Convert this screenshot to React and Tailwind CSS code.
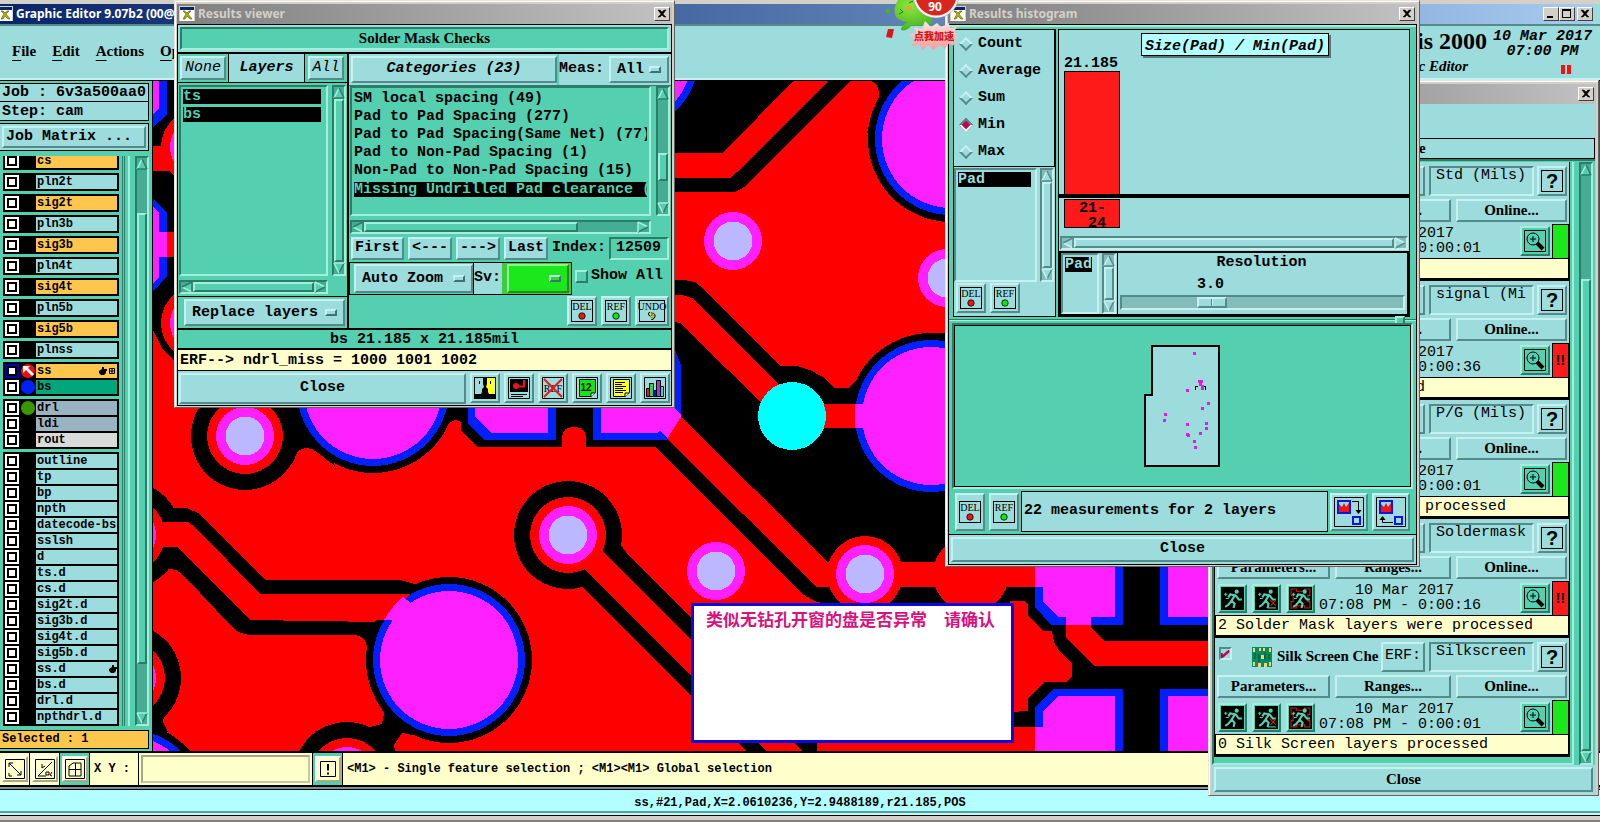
import React from "react";

const MONO = "font-['Liberation_Mono',monospace]";
const SERIF = "font-['Liberation_Serif',serif]";
const RAISED = "border-2 border-t-[#c6f1f1] border-l-[#c6f1f1] border-b-[#558a8a] border-r-[#558a8a] bg-[#9cdcdc]";
const SUNKEN = "border-2 border-t-[#558a8a] border-l-[#558a8a] border-b-[#c6f1f1] border-r-[#c6f1f1]";
const RAISED_GREEN = "border-2 border-t-[#a4efdb] border-l-[#a4efdb] border-b-[#2c7d67] border-r-[#2c7d67] bg-[#54cfb0]";
const SUNKEN_GREEN = "border-2 border-t-[#2c7d67] border-l-[#2c7d67] border-b-[#a4efdb] border-r-[#a4efdb]";

function XIcon() {
  return (
    <svg viewBox="0 0 16 16" className="h-4 w-4 shrink-0">
      <rect x="0" y="0" width="16" height="15" fill="#d4d0c8" />
      <rect x="1" y="1" width="14" height="3" fill="#0a246a" />
      <rect x="1" y="4" width="14" height="11" fill="#fff" />
      <path d="M4 5l3 3-3 5h2l2-3 3 3h2l-4-5 3-3h-2L8 7 6 5z" fill="#b5b000" stroke="#555500" strokeWidth="0.6" />
    </svg>
  );
}

function WinButton({ kind, label }) {
  return (
    <button
      type="button"
      aria-label={label}
      className="flex h-[14px] w-4 shrink-0 items-center justify-center border border-t-white border-l-white border-r-[#404040] border-b-[#404040] bg-[#d4d0c8]"
    >
      <svg viewBox="0 0 10 10" className="h-[10px] w-[10px]">
        {kind === "close" && <path d="M1 1h2l2 2 2-2h2L6 5l3 3H7L5 6 3 8H1l3-3z" fill="#000" stroke="#000" strokeWidth="0.5" />}
        {kind === "min" && <rect x="1" y="7" width="6" height="2" fill="#000" />}
        {kind === "max" && <path d="M0 0h9v9H0zM1 2v6h7V2z" fill="#000" fillRule="evenodd" />}
      </svg>
    </button>
  );
}

function TitleText({ children, className }) {
  return (
    <span className={"flex-1 truncate font-['Noto_Sans',sans-serif] text-[12px] leading-5 font-bold whitespace-nowrap " + className}>
      {children}
    </span>
  );
}

function DesktopWindow({ title, className, children, icon = true }) {
  return (
    <section
      aria-label={title || "Checklist"}
      className={"absolute flex flex-col border border-t-[#e8e4dc] border-l-[#e8e4dc] border-r-[#606060] border-b-[#606060] bg-[#d4d0c8] px-[2px] pt-[3px] pb-px shadow-[inset_1px_1px_0_#fff] " + className}
    >
      <header className="flex h-5 items-center gap-[3px] bg-linear-to-r from-[#808080] to-[#c2c2c2] px-[2px]">
        {icon && <XIcon />}
        <TitleText className="text-[#d4d0c8]">{title}</TitleText>
        <WinButton kind="close" label="Close window" />
      </header>
      {children}
    </section>
  );
}

function Arrow({ dir, green }) {
  const hi = green ? "#a4efdb" : "#c6f1f1";
  const lo = green ? "#2c7d67" : "#558a8a";
  const face = green ? "#54cfb0" : "#9cdcdc";
  const rot = { up: 0, right: 90, down: 180, left: 270 }[dir];
  const flip = dir === "down" || dir === "right";
  return (
    <svg viewBox="0 0 12 12" className="h-3 w-3 shrink-0">
      <g transform={`rotate(${rot} 6 6)`}>
        <path d="M6 1L11 11H1z" fill={face} />
        <path d="M6 1L1 11" stroke={dir === "down" ? lo : hi} strokeWidth="1.5" />
        <path d="M6 1L11 11" stroke={dir === "down" ? hi : lo} strokeWidth="1.5" />
        <path d="M1 11H11" stroke={flip ? hi : lo} strokeWidth="1.5" />
      </g>
    </svg>
  );
}

function Scroll({ horizontal, green, start = 0, size = 100, className = "" }) {
  const rest = 100 - start - size;
  const trough = green ? SUNKEN_GREEN + " bg-[#45ad94]" : SUNKEN + " bg-[#84bcbc]";
  const thumb = green ? RAISED_GREEN : RAISED;
  return (
    <div className={`flex shrink-0 ${horizontal ? "h-[14px] flex-row items-center" : "w-[14px] flex-col items-center"} ${trough} ${className}`}>
      <Arrow dir={horizontal ? "left" : "up"} green={green} />
      <div className={`flex min-h-0 min-w-0 flex-1 self-stretch ${horizontal ? "flex-row" : "flex-col"}`}>
        <div style={{ flexGrow: start }} />
        <div style={{ flexGrow: size }} className={thumb} />
        <div style={{ flexGrow: rest }} />
      </div>
      <Arrow dir={horizontal ? "right" : "down"} green={green} />
    </div>
  );
}

function Picker({ label, value, className, green }) {
  return (
    <div className={`flex items-center pr-[6px] pl-[6px] ${green ? "border-2 border-t-[#8df58d] border-l-[#8df58d] border-r-[#2a862a] border-b-[#2a862a] bg-[#1ae81a]" : RAISED} ${className}`}>
      <select aria-label={label} defaultValue={value} className="min-w-0 flex-1 appearance-none bg-transparent leading-5 outline-none">
        <option value={value}>{value}</option>
      </select>
      <span className={`h-[7px] w-3 shrink-0 border-2 border-t-[#c6f1f1] border-l-[#c6f1f1] border-r-[#3f7373] border-b-[#3f7373] ${green ? "bg-[#1ae81a]" : "bg-[#9cdcdc]"}`} />
    </div>
  );
}

function Btn({ children, className = "" }) {
  return (
    <button type="button" className={`flex items-center justify-center whitespace-nowrap ${RAISED} ${className}`}>
      {children}
    </button>
  );
}

function StampBtn({ text, dot, tall, wide }) {
  return (
    <button type="button" className={`flex shrink-0 items-center justify-center ${RAISED} ${tall ? "h-[38px]" : "h-[30px]"} ${wide ? "w-[34px]" : "w-[30px]"}`}>
      <span className={`flex h-[22px] flex-col items-center border border-black ${wide ? "w-[26px]" : "w-[22px]"}`}>
        <span className={`${SERIF} text-[10px] leading-[11px] font-normal`}>{text}</span>
        <svg viewBox="0 0 8 8" className="h-2 w-2">
          {dot ? (
            <circle cx="4" cy="4" r="3.2" fill={dot} stroke="#000" strokeWidth="0.8" />
          ) : (
            <>
              <path d="M3 0L1 2l2 2M1.5 2H5q2 1 1 3t-3 2" fill="none" stroke="#000" strokeWidth="2.4" />
              <path d="M3 0.5L1.5 2 3 3.5M2 2h3q1.5 1 .7 2.7T3 7" fill="none" stroke="#f2ef20" strokeWidth="1.2" />
            </>
          )}
        </svg>
      </span>
    </button>
  );
}

/* ---------- board artwork ---------- */

function Pad({ x, y, ring = true, halo = false }) {
  return (
    <g>
      {halo && <circle cx={x} cy={y} r="54" fill="#000" />}
      {ring && <circle cx={x} cy={y} r="38" fill="#f00" />}
      <circle cx={x} cy={y} r="29" fill="#ff20ff" />
      <circle cx={x} cy={y} r="19.5" fill="#bbb8ff" />
    </g>
  );
}

function Disc({ x, y }) {
  return (
    <g>
      <circle cx={x} cy={y} r="83" fill="#000" />
      <circle cx={x} cy={y} r="76" fill="#0020ff" />
      <circle cx={x} cy={y} r="69" fill="#ff20ff" />
    </g>
  );
}

function Board() {
  return (
    <svg className="absolute inset-0 h-full w-full" shapeRendering="crispEdges" aria-label="Board layout">
      <g transform="translate(-153 -81)">
        <rect x="153" y="81" width="1500" height="700" fill="#f00" />

        <path d="M153 81H185V362L173 360L162 348L153 330z" fill="#000" />
        <path d="M153 81H167V115L153 127z" fill="#0020ff" />
        <path d="M153 81H159V108L153 114z" fill="#ff20ff" />
        <rect x="153" y="146" width="30" height="25" fill="#f00" />
        <Pad x={199} y={147} />
        <path d="M153 198L167 213V276L153 292z" fill="#0020ff" />
        <path d="M153 206L159 213V232H167V257H159V277L153 284z" fill="#ff20ff" />
        <rect x="167" y="232" width="10" height="25" fill="#f00" />
        <Pad x={199} y={323} />

        <path d="M280 405H300L335 466L318 453L312 449L305 448L298 451L293 462L285 470z" fill="#000" />
        <Pad x={245} y={436} halo />

        <path d="M415 461L440 437L447 424L455 420L461 422V431L478 447H562V437Q563 427 574 427T586 437V447H655L804 595L817 602H900V400H675V395H430z" fill="#000" />
        <Disc x={373} y={390} />

        <path d="M468 400V424L484 440H556V400z" fill="#0020ff" />
        <path d="M475 400V416L491 433H548V400z" fill="#ff20ff" />
        <path d="M593 400V440H667L681 424V365L675 350V400z" fill="#0020ff" />

        <path d="M660 280H684L695 282L705 290L780 366H797L810 370L823 377L835 388H848L857 380L862 370L931 333H960V562H828L681 418L660 400z" fill="#000" />
        <path d="M675 350L681 365V424H675z" fill="#0020ff" />
        <path d="M601 400V433H657L660 431L667 438L681 424V415L674 408V400z" fill="#ff20ff" />
        <path d="M681 417L667 439L817 587H1035V562H828z" fill="#f00" />
        <path d="M660 295H682L692 298L790 396L775 416L680 323L660 320z" fill="#f00" />

        <path d="M817 587H1035V640H820V602L805 596z" fill="#000" />
        <path d="M828 562H1035V587H817z" fill="#f00" />
        <path d="M828 562H1000V520H828z" fill="#000" />
        <circle cx="971" cy="574" r="38" fill="#f00" />
        <Pad x={865} y={574} />

        <Disc x={931} y={416} />
        <rect x="820" y="404" width="36" height="24" fill="#f00" />
        <rect x="855" y="404" width="14" height="24" fill="#ff20ff" />
        <circle cx="792" cy="416" r="34" fill="#0ff" />

        <path d="M660 81H851L743 188L735 192H660z" fill="#000" />
        <path d="M660 153H723L793 81H829L736 173L730 178H660z" fill="#f00" />
        <circle cx="622" cy="56" r="77" fill="#0020ff" />
        <circle cx="622" cy="56" r="70" fill="#ff20ff" />
        <path d="M871 81Q880 84 879 97L872 112L867 133L900 160L960 81z" fill="#000" />
        <Disc x={951} y={139} />
        <Pad x={733} y={241} ring={false} />
        <Pad x={947} y={278} ring={false} />

        <circle cx="127" cy="535" r="54" fill="#000" />
        <path d="M153 488L173 508H187L200 514L265 580H400L415 584L400 640L367 671V647Q366 636 355 635H250Q240 634 233 628L183 575Q175 567 165 570L153 582z" fill="#000" />
        <path d="M153 522H188L195 527L260 594H411L380 622L250 620L177 547H153z" fill="#f00" />
        <circle cx="127" cy="535" r="38" fill="#f00" />
        <circle cx="127" cy="535" r="29" fill="#ff20ff" />
        <path d="M376 700L384 713L382 724L370 727L395 751L394 745L402 733L440 740L430 700z" fill="#000" />
        <Disc x={449} y={660} />
        <path d="M360 594H411L399 604L386 620H360z" fill="#f00" />
        <path d="M384 620Q392 606 403 597L411 603L400 615L393 620z" fill="#ff20ff" />
        <Pad x={347} y={776} halo />

        <path d="M153 700L174 704L164 716L163 722L168 732L153 736z" fill="#000" />
        <circle cx="127" cy="678" r="54" fill="#000" />
        <circle cx="127" cy="678" r="38" fill="#f00" />
        <circle cx="127" cy="678" r="29" fill="#ff20ff" />
        <Disc x={127} y={805} />

        <path d="M621 530V545L628 555L817 743V765H780L586 587H568V500z" fill="#000" />
        <path d="M582 587L747 752H767L586 571z" fill="#000" />
        <path d="M604 553L586 571L777 762H813z" fill="#f00" />
        <Pad x={568} y={535} halo />
        <path d="M599 548L581 566L610 595L640 589z" fill="#f00" />
        <Pad x={716} y={571} ring={false} />

        <path d="M1010 587H1250V751H1035V727H1010z" fill="#000" />
        <path d="M1010 601H1025L1028 605V615L1043 631H1052L1054 642L1060 652L1072 664V676L1066 682H1045L1028 698V711L1010 712z" fill="#f00" />
        <rect x="1010" y="727" width="25" height="24" fill="#f00" />
        <rect x="1123" y="560" width="40" height="130" fill="#000" />
        <path d="M1035 560H1123V625H1051L1035 607z" fill="#0020ff" />
        <path d="M1035 560H1115V617H1091V625H1066V617H1058L1043 601V587H1035z" fill="#ff20ff" />
        <path d="M1066 625H1091V628L1104 641H1250V666H1094L1066 638z" fill="#f00" />
        <path d="M1160 560H1250V625H1160z" fill="#0020ff" />
        <path d="M1168 560H1250V617H1168z" fill="#ff20ff" />
        <path d="M1035 727V707L1053 689H1123V760H1035z" fill="#0020ff" />
        <path d="M1043 727V711L1059 696H1115V760H1035V727z" fill="#ff20ff" />
        <path d="M1160 689H1250V760H1160z" fill="#0020ff" />
        <path d="M1168 696H1250V760H1168z" fill="#ff20ff" />
      </g>
    </svg>
  );
}

/* ---------- layer sidebar ---------- */

const O = "bg-[#ffc64d]";
const C = "bg-[#9cdcdc]";
const GROUPS = [
  [["cs", O]], [["pln2t", C]], [["sig2t", O]], [["pln3b", C]], [["sig3b", O]],
  [["pln4t", C]], [["sig4t", O]], [["pln5b", C]], [["sig5b", O]], [["plnss", C]],
  [["ss", O, "arrow"], ["bs", "bg-[#00a67c]", "#0020ff"]],
  [["drl", "bg-[#9ab3c0]", "#3c9600"], ["ldi", "bg-[#9ab3c0]"], ["rout", "bg-[#dadada]"]],
  ["outline", "tp", "bp", "npth", "datecode-bs", "sslsh", "d", "ts.d", "cs.d", "sig2t.d", "sig3b.d", "sig4t.d", "sig5b.d", "ss.d", "bs.d", "drl.d", "npthdrl.d"].map((n) => [n, C]),
];

function Hand() {
  return (
    <svg viewBox="0 0 8 8" className="h-2 w-2">
      <path d="M0 4l3-2V0h2v2h3v2H7v2l-2 2H2L0 6z" fill="#000" />
    </svg>
  );
}

function LayerRow({ name, tone, mark }) {
  const active = name === "ss";
  return (
    <li className="flex h-[14px] items-center pr-[2px] pl-[2px]">
      <input
        type="checkbox"
        aria-label={"Display " + name}
        className={`h-[14px] w-[14px] shrink-0 appearance-none border-2 bg-white shadow-[inset_0_0_0_2px_#000] ${active ? "border-[#0000b4]" : "border-white"}`}
      />
      <span className="flex w-[17px] shrink-0 items-center justify-center">
        {mark && (
          <svg viewBox="0 0 14 14" className="h-[14px] w-[14px]">
            <circle cx="7" cy="7" r="7" fill={active ? "#e81010" : mark} />
            {active && <path d="M2 2h7L7 4l6 6-2 2-6-6-3 3z" fill="#fff" />}
          </svg>
        )}
      </span>
      <span className={`flex h-[14px] min-w-0 flex-1 items-center pl-px text-[12px] leading-[14px] ${tone}`}>
        <span className="flex-1 whitespace-nowrap">{name}</span>
        {(active || name === "ss.d") && <Hand />}
        {active && (
          <svg viewBox="0 0 6 6" className="mx-[2px] h-[6px] w-[6px]">
            <path d="M.5.5h5v5h-5zM3 0v6M0 3h6" fill="none" stroke="#000" />
          </svg>
        )}
      </span>
    </li>
  );
}

function Sidebar() {
  return (
    <aside className="flex w-[153px] shrink-0 flex-col border-r border-black bg-[#54cfb0] pt-[2px] pr-[3px]">
      <div className="h-[19px] border border-l-0 border-black bg-[#9cdcdc] pl-[2px] leading-[18px]">Job : 6v3a500aa0</div>
      <div className="h-[19px] border border-t-0 border-l-0 border-black bg-[#9cdcdc] pl-[2px] leading-5">Step: cam</div>
      <div className="mt-[2px] border border-l-0 border-black bg-[#9cdcdc] p-[2px]">
        <button type="button" className={`block h-[22px] w-full pl-[2px] text-left leading-[18px] ${RAISED}`}>Job Matrix ...</button>
      </div>
      <div className="mt-[5px] flex h-[570px] min-h-0 pl-[3px]">
        <div className="flex min-w-0 flex-1 flex-col justify-end gap-[3px] overflow-hidden">
          {GROUPS.map((group, i) => (
            <ul key={i} className="flex flex-col gap-[2px] bg-black py-[2px]">
              {group.map(([name, tone, mark]) => (
                <LayerRow key={name} name={name} tone={tone} mark={mark} />
              ))}
            </ul>
          ))}
        </div>
        <div className="mr-[3px] ml-[3px] w-[3px] border-x border-x-[#2c7d67]" />
        <div className="mr-[5px] w-[2px] bg-[#a4efdb]" />
        <Scroll green start={8} size={83} />
      </div>
      <div className="mt-[4px] h-[19px] border border-l-0 border-black bg-[#ffc64d] pl-[2px] text-[12px] leading-[17px]">Selected : 1</div>
      <div className="flex-1" />
    </aside>
  );
}

/* ---------- results viewer ---------- */

const CATEGORIES = [
  "SM local spacing (49)",
  "Pad to Pad Spacing (277)",
  "Pad to Pad Spacing(Same Net) (77)",
  "Pad to Non-Pad Spacing (1)",
  "Non-Pad to Non-Pad Spacing (15)",
  "Missing Undrilled Pad clearance (22)",
];

function ToolBtn({ label, children }) {
  return (
    <button type="button" aria-label={label} className={`flex h-[30px] w-[30px] shrink-0 items-center justify-center ${RAISED}`}>
      <svg viewBox="0 0 22 22" className="h-[22px] w-[22px]">{children}</svg>
    </button>
  );
}

function ResultsViewer() {
  return (
    <DesktopWindow title="Results viewer" className="top-0 left-[174px] w-[501px]">
      <div className="flex flex-col border border-black bg-[#9cdcdc]">
        <div className="border-b-2 border-black p-[2px]">
          <h1 className={`h-[23px] text-center text-[15px] leading-[19px] font-bold ${SERIF} ${SUNKEN_GREEN} bg-[#54cfb0]`}>Solder Mask Checks</h1>
        </div>
        <div className="flex h-[274px]">
          <div className="flex w-[171px] shrink-0 flex-col border-r-2 border-black bg-[#54cfb0]">
            <div className="flex h-[29px] border-b border-black">
              <Btn className="my-[2px] mr-[2px] ml-[2px] w-[46px] font-normal italic">None</Btn>
              <div className="flex flex-1 items-center justify-center border-x border-black bg-[#9cdcdc] italic">Layers</div>
              <Btn className="mx-[3px] my-[2px] w-[36px] font-normal italic">All</Btn>
            </div>
            <div className="flex flex-1 gap-[4px] py-[2px] pl-px">
              <ul className={`flex-1 pt-[2px] pr-[5px] pl-[2px] ${SUNKEN_GREEN}`}>
                <li className="mb-[3px] h-[15px] bg-black leading-4 text-[#54cfb0]">ts</li>
                <li className="h-[15px] bg-black leading-4 text-[#54cfb0]">bs</li>
              </ul>
              <Scroll green className="mr-px" />
            </div>
            <Scroll green horizontal className="mt-[2px] mr-[19px] mb-[2px] ml-px" />
            <div className="flex h-[32px] border-t border-black pt-[2px] pr-[2px] pb-[2px] pl-[6px]">
              <Picker label="Layer mode" value="Replace layers" className="flex-1" />
            </div>
          </div>
          <div className="flex min-w-0 flex-1 flex-col bg-[#54cfb0]">
            <div className="flex h-[32px] border-b border-[#2c7d67] bg-[#9cdcdc]">
              <Btn className="my-[2px] ml-[2px] w-[206px] italic">Categories (23)</Btn>
              <label className="flex flex-1 items-center border-l-2 border-[#54cfb0] bg-[#9cdcdc]">Meas:</label>
              <Picker label="Measurement filter" value="All" className="my-[2px] mr-[2px] w-[60px]" />
            </div>
            <div className="flex h-[130px] gap-[5px] pl-px">
              <ul className={`min-w-0 flex-1 overflow-hidden pt-[2px] pr-[2px] pl-[2px] ${SUNKEN_GREEN}`}>
                {CATEGORIES.map((c, i) => (
                  <li key={c} className={`h-[18px] overflow-hidden text-clip whitespace-nowrap ${i === 5 ? "flex items-center" : "leading-[18px]"}`}>
                    {i === 5 ? <span className="h-[15px] w-full overflow-hidden bg-black leading-4 text-[#54cfb0]">{c}</span> : c}
                  </li>
                ))}
              </ul>
              <Scroll green start={54} size={25} className="mr-px" />
            </div>
            <Scroll green horizontal start={0} size={78} className="mt-[4px] mr-[20px] ml-px" />
            <div className="mt-[2px] flex h-[25px] items-center pl-[2px]">
              <Btn className="h-[23px] w-[53px]">First</Btn>
              <Btn className="ml-[4px] h-[23px] w-[44px]">&lt;---</Btn>
              <Btn className="ml-[4px] h-[23px] w-[44px]">---&gt;</Btn>
              <Btn className="ml-[4px] h-[23px] w-[44px]">Last</Btn>
              <label htmlFor="index" className="flex-1 pl-[4px]">Index:</label>
              <input id="index" defaultValue="12509" className={`mr-[2px] h-[23px] w-[60px] bg-transparent pb-[3px] pl-[5px] ${SUNKEN_GREEN}`} />
            </div>
            <div className="mt-px flex h-[33px] items-center">
              <div className="flex h-[33px] border border-black">
                <Picker label="Zoom mode" value="Auto Zoom" className="my-px ml-[4px] w-[119px]" />
                <span className="flex items-center border-l border-black bg-[#9cdcdc] pr-px">Sv:</span>
                <div className="flex bg-[#3ecb3e] py-px pr-[2px] pl-[5px]">
                  <Picker green label="Severity" value="" className="w-[62px]" />
                </div>
              </div>
              <label className="ml-[3px] flex items-center gap-[3px] pb-[4px]">
                <input type="checkbox" className={`h-[13px] w-[13px] appearance-none ${RAISED_GREEN}`} />
                Show All
              </label>
            </div>
            <div className="mt-px flex justify-end gap-[4px] pr-[2px]">
              <StampBtn text="DEL" dot="#f01414" />
              <StampBtn text="REF" dot="#14e614" />
              <StampBtn text="UNDO" wide />
            </div>
          </div>
        </div>
        <div className="h-[22px] border-y-2 border-black bg-[#54cfb0] text-center leading-[19px]">bs 21.185 x 21.185mil</div>
        <div className="h-[21px] border-b border-black bg-[#ffffcc] pl-[2px] leading-[21px]">ERF--&gt; ndrl_miss = 1000 1001 1002</div>
        <div className="flex h-[34px] items-center gap-[4px] px-px">
          <Btn className="h-[31px] flex-1">Close</Btn>
          <ToolBtn label="Compare">
            <path d="M0 0h22v22H0z" fill="#000" /><path d="M1 1h8v6l1 3-2 2v3l-1 2H1z" fill="#9cdcdc" /><path d="M21 1h-8v6l-1 3 2 2v3l1 2h6z" fill="#ffff20" />
            <path d="M5.500 4v3M16.500 4v3" stroke="#000" />
          </ToolBtn>
          <ToolBtn label="Snapshot">
            <path d="M.5.5h21v21H.5z" fill="none" stroke="#000" /><path d="M2 2h18v13H2z" fill="#000" /><circle cx="8" cy="9" r="3" fill="#f01414" /><path d="M9 9.500h7V3" stroke="#f01414" strokeWidth="2" fill="none" /><path d="M3 17.500h16M3 19.500h12" stroke="#000" />
          </ToolBtn>
          <ToolBtn label="Remove reference">
            <path d="M.5.5h21v21H.5z" fill="none" stroke="#000" /><text x="11" y="15" textAnchor="middle" fontSize="10" fontFamily="Liberation Serif" fontWeight="400">REF</text><path d="M2 2l18 18M20 2L2 20" stroke="#f01414" strokeWidth="2" />
          </ToolBtn>
          <ToolBtn label="Numbering">
            <path d="M.5.5h21v21H.5z" fill="none" stroke="#000" /><path d="M3.500 2.500h16v13l-4 4h-12z" fill="#14e614" stroke="#000" /><path d="M15 20v-4h4" fill="#fff" stroke="#000" /><text x="10" y="14" textAnchor="middle" fontSize="10" fontFamily="Liberation Sans">12</text>
          </ToolBtn>
          <ToolBtn label="Notes">
            <path d="M.5.5h21v21H.5z" fill="none" stroke="#000" /><path d="M3.500 2.500h16v13l-4 4h-12z" fill="#ffff20" stroke="#000" /><path d="M5 5.500h10M5 7.500h7M5 9.500h11M5 11.500h8M5 13.500h11M5 15.500h8" stroke="#000" /><path d="M15 20v-4h4" fill="#fff" stroke="#000" />
          </ToolBtn>
          <ToolBtn label="Histogram">
            <path d="M.5.5h21v21H.5z" fill="none" stroke="#000" /><g stroke="#000"><path d="M2.500 11.500h3v8h-3z" fill="#f01414" /><path d="M5.500 6.500h4v13h-4z" fill="#30d060" /><path d="M9.500 13.500h3v6h-3z" fill="#1010d0" /><path d="M12.500 3.500h4v16h-4z" fill="#b030d0" /><path d="M16.500 9.500h3v10h-3z" fill="#30d8e8" /></g>
          </ToolBtn>
        </div>
      </div>
    </DesktopWindow>
  );
}

/* ---------- results histogram ---------- */

const POINTS = [
  [1194, 354], [1200, 383], [1202, 387], [1187, 391], [1208, 404], [1202, 409], [1165, 415], [1164, 421],
  [1187, 425], [1206, 424], [1206, 429], [1200, 434], [1187, 435], [1188, 436], [1194, 442], [1195, 448], [1199, 382], [1201, 382], [1200, 385], [1202, 389],
];

function CopyBtn({ back }) {
  return (
    <button type="button" aria-label={back ? "Copy back" : "Copy forward"} className={`flex h-[38px] w-[38px] shrink-0 items-center justify-center ${RAISED}`}>
      <svg viewBox="0 0 30 30" className="h-[30px] w-[30px] shrink-0">
        <path d="M.5.5h29v29H.5z" fill="none" stroke="#000" />
        <path d="M4 4h12v12H4z" fill="#9cdcdc" stroke="#1414dc" strokeWidth="2" />
        <path d="M5 7l3 3 2-4 2 4 3-4v9H5z" fill="#f01414" />
        <path d="M19 20h7v7h-7z" fill="#9cdcdc" stroke="#1414dc" strokeWidth="2" />
        {back ? <path d="M6.500 19l-3 4h6z" fill="#000" /> : <path d="M24.500 17l-3-4h6z" fill="#000" />}
        {back ? <path d="M17 25.500H6.500V22" fill="none" stroke="#000" /> : <path d="M18 4.500h6.500V13" fill="none" stroke="#000" />}
      </svg>
    </button>
  );
}

function ResultsHistogram() {
  return (
    <DesktopWindow title="Results histogram" className="top-0 left-[945px] w-[475px]">
      <div className="flex flex-col border border-black bg-[#54cfb0]">
        <div className="flex h-[292px] gap-[2px] border-t-2 border-[#a4efdb] pt-[2px] pr-[6px] pl-[4px]">
          <div className="flex w-[103px] shrink-0 flex-col border border-black bg-[#9cdcdc]">
            <fieldset className="flex h-[137px] flex-col justify-between border-r border-b border-black">
              {["Count", "Average", "Sum", "Min", "Max"].map((n) => (
                <label key={n} className="flex h-[27px] items-center gap-[7px] pt-px pl-[7px]">
                  <input
                    type="radio"
                    name="stat"
                    defaultChecked={n === "Min"}
                    className={`h-[10px] w-[10px] rotate-45 appearance-none border-2 border-t-[#c6f1f1] border-l-[#c6f1f1] border-r-[#558a8a] border-b-[#558a8a] checked:border-t-[#558a8a] checked:border-l-[#558a8a] checked:border-r-[#e0fafa] checked:border-b-[#e0fafa] checked:bg-[#c4004e]`}
                  />
                  {n}
                </label>
              ))}
            </fieldset>
            <div className="flex flex-1 gap-[3px] pt-px">
              <ul className={`flex-1 py-[2px] pr-[4px] pl-[2px] ${SUNKEN}`}>
                <li className="h-[15px] bg-black leading-4 text-[#9cdcdc]">Pad</li>
              </ul>
              <Scroll className="mr-px" />
            </div>
            <div className="flex h-[34px] gap-[4px] pt-px pl-[2px]">
              <StampBtn text="DEL" dot="#f01414" />
              <StampBtn text="REF" dot="#14e614" />
            </div>
          </div>
          <div className="flex min-w-0 flex-1 flex-col border border-black bg-[#9cdcdc]">
            <div className="relative flex h-[168px] flex-col justify-end border-b-4 border-black pl-[5px]">
              <div className="absolute top-[3px] left-[82px] h-[23px] w-[188px] border border-black bg-[#b3ffff] pl-[3px] leading-[25px] whitespace-nowrap italic shadow-[2px_2px_0_#557a7a]">Size(Pad) / Min(Pad)</div>
              <span className="leading-[14px]">21.185</span>
              <div className="h-[123px] w-[56px] border border-b-0 border-black bg-[#ff1a1a]" />
            </div>
            <div className="flex flex-1 items-start pt-px pl-[5px]">
              <div className="h-[29px] w-[56px] border border-black bg-[#ff1a1a] pt-px pl-[14px] leading-[15px] whitespace-pre text-black">{"21-\n 24"}</div>
            </div>
            <Scroll horizontal className="mx-px" />
            <div className="mt-px flex h-[65px] border-2 border-black">
              <div className={`w-[38px] shrink-0 pt-[2px] pl-[2px] ${SUNKEN}`}>
                <span className="block h-[15px] w-[27px] bg-black leading-4 text-[#9cdcdc]">Pad</span>
              </div>
              <Scroll className="mr-px ml-[3px]" />
              <div className="flex flex-1 flex-col border-l border-black px-[2px]">
                <label htmlFor="res" className="pr-[2px] text-center leading-[19px]">Resolution</label>
                <output className="mt-[3px] pl-[77px] leading-5">3.0</output>
                <input
                  id="res" type="range" min="0" max="10" step="0.1" defaultValue="3"
                  className={`h-[15px] w-full appearance-none bg-[#84bcbc] ${SUNKEN} [&::-webkit-slider-thumb]:h-[11px] [&::-webkit-slider-thumb]:w-[30px] [&::-webkit-slider-thumb]:appearance-none [&::-webkit-slider-thumb]:border-2 [&::-webkit-slider-thumb]:border-t-[#c6f1f1] [&::-webkit-slider-thumb]:border-l-[#c6f1f1] [&::-webkit-slider-thumb]:border-r-[#558a8a] [&::-webkit-slider-thumb]:border-b-[#558a8a] [&::-webkit-slider-thumb]:bg-[linear-gradient(90deg,#9cdcdc_12px,#558a8a_12px,#558a8a_13px,#c6f1f1_13px,#c6f1f1_14px,#9cdcdc_14px)]`}
                />
              </div>
            </div>
          </div>
        </div>
        <div className="flex h-[6px] items-center">
          <div className="h-[2px] flex-1 border-t border-b border-t-[#2c7d67] border-b-[#a4efdb]" />
          <div className={`h-[9px] w-[10px] ${RAISED_GREEN}`} />
          <div className="h-[2px] w-[11px] border-t border-b border-t-[#2c7d67] border-b-[#a4efdb]" />
        </div>
        <div className={`mx-[3px] h-[166px] ${SUNKEN_GREEN}`}>
          <div className="flex h-full items-center justify-center border border-black pr-[2px]">
            <svg viewBox="1144 346 76 122" className="h-[122px] w-[76px]" shapeRendering="crispEdges">
              <path d="M1152 347H1219V467H1145V396H1152z" fill="#9cdcdc" stroke="#000" strokeWidth="2" />
              <path d="M1195 391v-4h3M1205 391v-4h-3" fill="none" stroke="#000" />
              {POINTS.map(([x, y], i) => <rect key={i} x={x - 1} y={y - 1} width="3" height="3" fill="#e01ae0" />)}
            </svg>
          </div>
        </div>
        <div className="flex h-[45px] items-center gap-[4px] pr-[6px] pl-[6px]">
          <StampBtn tall text="DEL" dot="#f01414" />
          <StampBtn tall text="REF" dot="#14e614" />
          <div className="-mx-[2px] flex h-[41px] flex-1 items-center border border-black bg-[#9cdcdc] pl-[2px]">22 measurements for 2 layers</div>
          <CopyBtn />
          <CopyBtn back />
        </div>
        <div className="flex border-t border-black bg-[#9cdcdc] p-[2px]">
          <Btn className="h-[25px] flex-1">Close</Btn>
        </div>
      </div>
    </DesktopWindow>
  );
}

/* ---------- checklist ---------- */

const CHECKS = [
  { name: "Drill Checks", erf: "Std (Mils)", time: "07:08 PM - 0:00:01", msg: "Drill layers done", bad: false },
  { name: "Signal Checks", erf: "signal (Mi", time: "07:08 PM - 0:00:36", msg: "8 Signal layers checked", bad: true },
  { name: "P/G Checks", erf: "P/G (Mils)", time: "07:08 PM - 0:00:01", msg: "10 Power/Ground layers processed", bad: false },
  { name: "Solder Mask", erf: "Soldermask", time: "07:08 PM - 0:00:16", msg: "2 Solder Mask layers were processed", bad: true },
  { name: "Silk Screen Che", erf: "Silkscreen", time: "07:08 PM - 0:00:01", msg: "0 Silk Screen layers processed", bad: false },
];

function RunBtn({ kind }) {
  return (
    <button type="button" aria-label={"Run " + kind} className={`flex h-[29px] w-[29px] items-center justify-center ${RAISED_GREEN}`}>
      <svg viewBox="0 0 22 22" className="h-[23px] w-[23px]">
        <rect width="22" height="22" fill="#000" />
        {kind === "all" && <path d="M2 2h5v2h8V2h5v6h-2v6h2v6h-5v-2H7v2H2v-6h2V8H2z" fill="none" stroke="#e01414" />}
        <circle cx="15" cy="4.500" r="2" fill="#54cfb0" />
        <path d="M14 7l-4 6 3 3-1 4M11 12l-4 5-3 2M13 8l-4-1-2 3M14 8l3 4h3" fill="none" stroke="#54cfb0" strokeWidth="2" />
        <path d="M3 7h3M4.500 5.500v3M7.500 7h2M7.500 11h-3" stroke="#54cfb0" />
        {kind === "selected" && <path d="M14 12l6 6M20 12l-5 6" stroke="#e01414" />}
        {kind === "selected" && <path d="M12 20h8" stroke="#54cfb0" />}
      </svg>
    </button>
  );
}

function CheckCard({ name, erf, time, msg, bad }) {
  return (
    <article className="flex h-[119px] flex-col border-b-2 border-black bg-[#9cdcdc]">
      <div className="flex h-[37px] items-center pr-[2px] pl-[4px]">
        <span className={`mb-[6px] flex h-[13px] w-[13px] shrink-0 items-center justify-center ${SUNKEN}`}>
          <input id={"chk-" + erf} type="checkbox" defaultChecked className="peer absolute h-[13px] w-[13px] appearance-none" />
          <svg viewBox="0 0 10 10" className="h-[10px] w-[10px]"><path d="M1 4v4l8-7M1 6l1 2 7-6" stroke="#c4004e" strokeWidth="2" fill="none" /></svg>
        </span>
        <svg viewBox="0 0 20 20" className="ml-5 h-5 w-5 shrink-0">
          <rect width="20" height="20" fill="#0c8a5c" />
          <path d="M3 6v6M7 7v8M13 5v8M17 7v6M6 10h8" stroke="#07553a" strokeWidth="1" />
          <path d="M1 1h2v4H1zM7 1h2v3H7zM11 1h2v3h-2zM17 1h2v4h-2zM9 8h3v4H9zM1 15h2v4H1zM6 16h3v4H6zM12 16h3v4h-3zM17 15h2v4h-2z" fill="#ecd77c" />
        </svg>
        <label htmlFor={"chk-" + erf} className={`ml-[5px] w-[104px] shrink-0 text-[15px] font-bold whitespace-nowrap ${SERIF}`}>{name}</label>
        <Btn className="h-[30px] w-[44px] shrink-0 font-normal">ERF:</Btn>
        <input aria-label={name + " ERF"} defaultValue={erf} className={`ml-[4px] h-[30px] w-[105px] shrink-0 bg-transparent pb-[11px] pl-[5px] font-normal ${SUNKEN}`} />
        <button type="button" aria-label={name + " help"} className={`ml-[3px] flex h-[30px] w-[30px] shrink-0 items-center justify-center ${RAISED}`}>
          <span className="flex h-[22px] w-[22px] items-center justify-center border border-black font-['Liberation_Sans',sans-serif] text-[20px] leading-none">?</span>
        </button>
      </div>
      <div className={`flex h-[25px] gap-[5px] pr-[2px] pl-[2px] text-[15px] ${SERIF}`}>
        <Btn className="h-[23px] w-[113px]">Parameters...</Btn>
        <Btn className="h-[23px] w-[116px]">Ranges...</Btn>
        <Btn className="h-[23px] flex-1">Online...</Btn>
      </div>
      <div className="flex flex-1 items-stretch">
        <div className="flex items-center gap-[5px] pl-[3px]">
          <RunBtn kind="check" />
          <RunBtn kind="selected" />
          <RunBtn kind="all" />
        </div>
        <div className="flex-1 pt-[2px] pl-[4px] leading-[15px] font-normal whitespace-pre">{"    10 Mar 2017\n" + time}</div>
        <button type="button" aria-label={name + " results"} className={`my-[2px] mr-[2px] flex w-[30px] items-center justify-center ${RAISED_GREEN}`}>
          <svg viewBox="0 0 22 22" className="h-[22px] w-[22px]">
            <path d="M.5.5h21v21H.5z" fill="none" stroke="#000" />
            <circle cx="9" cy="9" r="6" fill="none" stroke="#000" />
            <path d="M9 6v6M6 9h6" stroke="#000" />
            <path d="M13 13l6 6" stroke="#000" strokeWidth="4" />
          </svg>
        </button>
        <span className={`flex w-[17px] items-center justify-center border border-b-0 border-black font-['Liberation_Sans',sans-serif] text-[14px] ${bad ? "bg-[#ff1a1a]" : "bg-[#1ae81a]"}`}>{bad ? "!!" : ""}</span>
      </div>
      <div className="h-[21px] border border-black bg-[#ffffcc] pl-[2px] leading-5 font-normal whitespace-nowrap">{msg}</div>
    </article>
  );
}

function Checklist() {
  return (
    <DesktopWindow icon={false} title="" className="top-[80px] left-[1208px] w-[391px]">
      <div className="flex flex-col bg-[#9cdcdc] px-px">
        <div className="h-[34px]" />
        <div className={`flex h-[21px] items-center border border-black pl-[129px] text-[15px] ${SERIF}`}>Action Name</div>
        <div className="flex h-[606px] gap-[5px] border-t-2 border-[#2c7d67] bg-[#54cfb0] pt-px pr-[2px]">
          <div className={`min-w-0 flex-1 border-r-2 border-b-2 border-l-2 border-l-[#2c7d67] border-r-[#a4efdb] border-b-[#a4efdb] pr-[2px]`}>
            <div className="border-x border-black">
              {CHECKS.map((c) => <CheckCard key={c.name} {...c} />)}
            </div>
          </div>
          <Scroll green start={18} size={82} />
        </div>
        <div className="p-[2px]">
          <Btn className={`h-[25px] w-full text-[15px] ${SERIF}`}>Close</Btn>
        </div>
      </div>
    </DesktopWindow>
  );
}

function Mascot() {
  return (
    <svg viewBox="0 0 80 54" className="absolute top-0 left-[883px] h-[54px] w-20" aria-label="Speed up">
      <defs>
        <radialGradient id="leaf" cx="0.4" cy="0.2" r="0.9"><stop offset="0" stopColor="#8be83c" /><stop offset="1" stopColor="#3fae1c" /></radialGradient>
        <linearGradient id="burst" x1="0" y1="0" x2="0" y2="1"><stop offset="0" stopColor="#fde4e4" /><stop offset="1" stopColor="#f99a9a" /></linearGradient>
      </defs>
      <circle cx="5" cy="11" r="2.5" fill="#4fae2c" />
      <path d="M5 29h6l-2 9-6-1z" fill="#e01414" />
      <path d="M15 0Q9 9 13 17Q19 22 25 22Q18 25 18 30Q24 32 29 25Q42 27 50 22L40 0z" fill="url(#leaf)" />
      <path d="M17 9l3 3-4 2M26 3l4-2" fill="none" stroke="#2e7d10" />
      <ellipse cx="26" cy="8" rx="3" ry="2.5" fill="#e0a83a" />
      <circle cx="53" cy="-5" r="23" fill="#f4f4f4" stroke="#909090" strokeWidth="0.5" />
      <circle cx="53" cy="-5" r="20.5" fill="#d8261c" />
      <text x="52" y="11" textAnchor="middle" fill="#fff" fontSize="12" fontWeight="700" fontFamily="Noto Sans, sans-serif">90</text>
      <path d="M26 35L34 33L31 27L39 29L42 21L48 27L54 23L58 27L66 23L67 28L74 27L71 32L75 37L70 40L73 46L65 44L62 49L57 45L50 50L46 45L39 50L37 45L28 46L32 40z" fill="url(#burst)" />
      <text x="51" y="40" textAnchor="middle" fill="#d41818" fontSize="10" fontWeight="900" fontFamily="Noto Sans CJK SC, sans-serif">点我加速</text>
    </svg>
  );
}

/* ---------- main editor ---------- */

function MsgBtn({ label, green, children }) {
  return (
    <button type="button" aria-label={label} className={`flex w-[30px] shrink-0 items-center justify-center border-r border-black ${green ? "bg-[#54cfb0]" : "bg-[#ffffcc]"}`}>
      <span className="border-2 border-t-[#fffff0] border-l-[#fffff0] border-r-[#a8a884] border-b-[#a8a884] bg-[#ffffcc] p-px">
        <svg viewBox="0 0 20 20" className="h-5 w-5" fill="none" stroke="#000">{children}</svg>
      </span>
    </button>
  );
}

export default function App() {
  return (
    <div className={`relative flex min-h-screen flex-col overflow-hidden bg-[#9cdcdc] text-[15px] font-bold text-black ${MONO}`}>
      <header className="border-t-4 border-[#d4d0c8] pr-[7px]">
        <div className="flex h-5 items-center gap-[3px] bg-linear-to-r from-[#0a246a] to-[#a6caf0]">
          <div className="-ml-[3px]"><XIcon /></div>
          <TitleText className="text-white">Graphic Editor 9.07b2 (00@HOST)</TitleText>
          <div className="flex">
            <WinButton kind="min" label="Minimize" />
            <WinButton kind="max" label="Maximize" />
            <span className="w-[2px]" />
            <WinButton kind="close" label="Close editor" />
          </div>
        </div>
      </header>
      <div className="flex h-[57px] border-b border-black shadow-[inset_0_2px_0_#558a8a,inset_0_-2px_0_#c6f1f1]">
        <nav className={`flex items-center gap-4 pb-[2px] pl-[12px] text-[15px] ${SERIF}`}>
          {["File", "Edit", "Actions", "Options"].map((m) => (
            <a key={m} href="#menu"><span className="underline underline-offset-4">{m[0]}</span>{m.slice(1)}</a>
          ))}
        </nav>
        <div className="flex-1" />
        <div className={`pt-[2px] pr-[6px] ${SERIF}`}>
          <div className="text-[24px] leading-[30px]">Genesis 2000</div>
          <div className="pl-[20px] text-[15px] leading-5 italic">Graphic Editor</div>
        </div>
        <div className="pt-[5px] pr-[8px] text-center leading-[15px] italic">
          10 Mar 2017<br />07:00 PM
          <div className="flex justify-center pt-[6px] pl-[48px]">
            <svg viewBox="0 0 10 9" className="h-[9px] w-[10px]"><path d="M0 0h4v9H0zM6 0h4v9H6z" fill="#f01414" /></svg>
          </div>
        </div>
      </div>
      <main className="flex min-h-[670px] flex-1">
        <Sidebar />
        <div className="relative min-w-0 flex-1 overflow-hidden">
          <Board />
          <div className="absolute top-[522px] left-[538px] h-[140px] w-[323px] border-[3px] border-[#0a0ae0] bg-white pl-[12px] font-['Noto_Sans_CJK_SC',sans-serif] text-[17px] leading-[26px] font-bold whitespace-nowrap text-[#d8127d]">
            类似无钻孔开窗的盘是否异常　请确认
          </div>
        </div>
      </main>
      <footer>
        <div className="flex h-[36px] border-y-2 border-black bg-[#ffffcc] text-[12px]">
          <MsgBtn label="Snap line"><path d="M.5.5h19v19H.500zM4 4l12 12M4 8V4h4M16 12v4h-4M7 17h-3v-3" /></MsgBtn>
          <MsgBtn label="Snap angle"><path d="M.5.5h19v19H.500zM3 17L17 3M3 17h8M7 5v4l3-2" /><path d="M11 13h3v3h-3zM17 13l-2 3 2 1" /></MsgBtn>
          <MsgBtn label="Grid" green><path d="M.5.5h19v19H.500zM4 7l4-3h8v13H4zM4 10.500h12M10.500 4v13" /></MsgBtn>
          <label htmlFor="xy" className="flex w-[48px] items-center pl-[4px] whitespace-pre">X Y :</label>
          <div className="flex border-x border-black p-[2px]">
            <input id="xy" className="w-[169px] border-2 border-t-[#a8a884] border-l-[#a8a884] border-r-[#c8c8a4] border-b-[#c8c8a4] bg-[#ffffcc]" />
          </div>
          <MsgBtn label="Alert" green><path d="M2.500 2.500h15v15h-15z" /><path d="M10 5v6.500M10 13.500v2" strokeWidth="2" /></MsgBtn>
          <div className="flex flex-1 items-center pl-[4px] whitespace-nowrap">&lt;M1&gt; - Single feature selection ; &lt;M1&gt;&lt;M1&gt; Global selection</div>
        </div>
        <div className="h-[2px] bg-[#7d9494]" />
        <div className="h-[27px] border-y border-black bg-[#b3ffff] text-center text-[12px] leading-[26px] shadow-[inset_0_-2px_0_#b3ffff,inset_0_-4px_0_#5c9c9c]">ss,#21,Pad,X=2.0610236,Y=2.9488189,r21.185,POS</div>
        <div className="h-[6px] border-b-2 border-[#808080] bg-[#d4d0c8]" />
      </footer>
      <Checklist />
      <ResultsViewer />
      <ResultsHistogram />
      <Mascot />
    </div>
  );
}
